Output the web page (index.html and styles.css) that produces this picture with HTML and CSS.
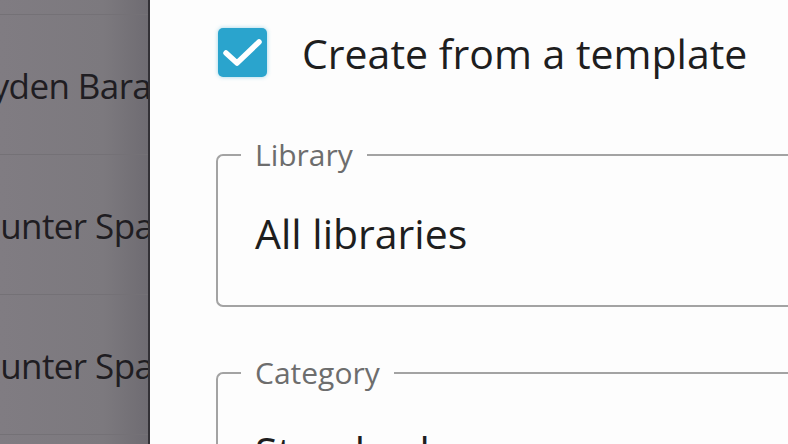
FILE: index.html
```html
<!DOCTYPE html>
<html>
<head>
<meta charset="utf-8">
<link rel="stylesheet" href="styles.css">
</head>
<body>
<div class="screen">
  <aside class="list">
    <div class="row first"></div>
    <div class="row"><span class="name n1">Jayden Barajas</span></div>
    <div class="row"><span class="name n2">Hunter Sparks</span></div>
    <div class="row"><span class="name n2">Hunter Sparks</span></div>
    <div class="row"></div>
  </aside>
  <main class="panel">
    <label class="check-row">
      <span class="checkbox">
        <svg viewBox="0 0 49 49" width="49" height="49"><path d="M8 25 L19 35 L41 14" fill="none" stroke="#fff" stroke-width="5.5" stroke-linecap="round" stroke-linejoin="round"/></svg>
      </span>
      <span class="check-label">Create from a template</span>
    </label>
    <fieldset class="field">
      <legend>Library</legend>
      <div class="value">All libraries</div>
    </fieldset>
    <fieldset class="field field-next">
      <legend>Category</legend>
      <div class="value">Standard</div>
    </fieldset>
  </main>
</div>
</body>
</html>
```
FILE: styles.css
```css
html, body {
  margin: 0;
  padding: 0;
  width: 788px;
  height: 444px;
  overflow: hidden;
  font-family: "Open Sans", "Noto Sans", sans-serif;
}
.screen {
  display: flex;
  height: 444px;
}
.list {
  width: 148px;
  flex: none;
  overflow: hidden;
  background: linear-gradient(to right, #807c82 0%, #7c797e 70%, #6f6c72 100%);
  border-right: 2px solid #333136;
  display: flex;
  flex-direction: column;
}
.row {
  flex: none;
  height: 139px;
  border-top: 1px solid #747176;
  display: flex;
  align-items: center;
  white-space: nowrap;
}
.row.first {
  height: 14px;
  border-top: none;
}
.name {
  font-size: 35px;
  color: #1f1d22;
  letter-spacing: -0.6px;
  margin-top: 2px;
}
.n1 { margin-left: -36px; }
.n2 { margin-left: -25px; }
.panel {
  flex: 1;
  background: #fdfdfd;
  padding: 28px 0 0 66px;
  overflow: hidden;
}
.check-row {
  display: flex;
  align-items: center;
  margin-left: 2px;
  height: 49px;
}
.checkbox {
  width: 49px;
  height: 49px;
  border-radius: 5px;
  background: #2aa4cd;
  box-shadow: 0 0 4px rgba(42,164,205,0.45);
  display: flex;
}
.check-label {
  margin-left: 35px;
  font-size: 41px;
  color: #1e1e1e;
}
.field {
  margin: 62px 0 0 0;
  padding: 0 0 0 37px;
  border: 2px solid #a3a3a3;
  border-radius: 7px;
  border-right: none;
  border-top-right-radius: 0;
  border-bottom-right-radius: 0;
  height: 168px;
  box-sizing: border-box;
}
.field-next {
  margin-top: 50px;
}
.field legend {
  padding: 0 14px;
  margin-left: -14px;
  font-size: 30px;
  line-height: 32px;
  color: #6d6d6d;
}
.value {
  font-size: 41px;
  color: #1e1e1e;
  margin-top: 34px;
}
```
